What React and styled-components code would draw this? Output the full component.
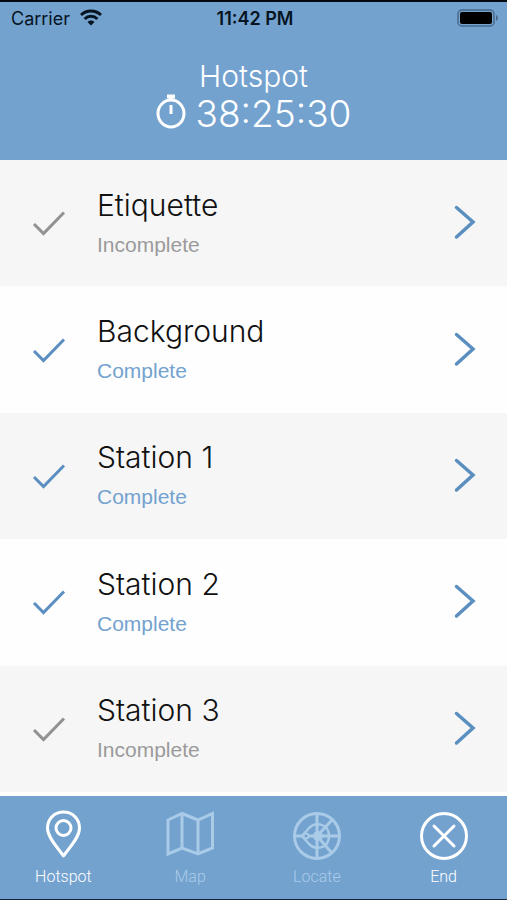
import { useState } from "react";
import styled, { createGlobalStyle } from "styled-components";

const stops = [
  { name: "Etiquette", complete: false },
  { name: "Background", complete: true },
  { name: "Station 1", complete: true },
  { name: "Station 2", complete: true },
  { name: "Station 3", complete: false },
];

const tabs = [
  { name: "Hotspot", icon: PinIcon },
  { name: "Map", icon: MapIcon, dimmed: true },
  { name: "Locate", icon: RadarIcon, dimmed: true },
  { name: "End", icon: EndIcon },
];

const App = () => {
  const [current, setCurrent] = useState("Hotspot");

  return (
    <Screen>
      <GlobalStyle />
      <StatusBar>
        <Carrier>
          Carrier
          <WifiIcon />
        </Carrier>
        <Clock>11:42 PM</Clock>
        <Battery>
          <BatteryIcon />
        </Battery>
      </StatusBar>

      <Header>
        <h1>Hotspot</h1>
        <Timer>
          <StopwatchIcon />
          <span>38:25:30</span>
        </Timer>
      </Header>

      <List>
        {stops.map((stop) => (
          <li key={stop.name}>
            <Row href="#">
              <CheckIcon color={stop.complete ? "#5b8fc2" : "#929292"} />
              <RowText>
                <RowTitle>{stop.name}</RowTitle>
                <RowStatus $complete={stop.complete}>
                  {stop.complete ? "Complete" : "Incomplete"}
                </RowStatus>
              </RowText>
              <ArrowIcon />
            </Row>
          </li>
        ))}
      </List>

      <TabBar>
        {tabs.map(({ name, icon: Icon, dimmed }) => (
          <Tab
            key={name}
            type="button"
            $dimmed={dimmed}
            aria-current={current === name ? "page" : undefined}
            onClick={() => setCurrent(name)}
          >
            <Icon />
            <span>{name}</span>
          </Tab>
        ))}
      </TabBar>
    </Screen>
  );
};

export default App;

function WifiIcon() {
  return (
    <svg width="22" height="18" viewBox="0 0 22 18" aria-hidden="true">
      <g fill="none" stroke="#06141f" strokeWidth="3">
        <path d="M1 6 C6.5 0.7 15.5 0.7 21 6" />
        <path d="M4.6 10 C8.2 6.4 13.8 6.4 17.4 10" />
      </g>
      <path d="M7.5 13 C9.5 11 12.5 11 14.5 13 L11 16.5 Z" fill="#06141f" />
    </svg>
  );
}

function BatteryIcon() {
  return (
    <svg width="42" height="18" viewBox="0 0 42 18" aria-hidden="true">
      <rect x="1" y="1" width="36" height="16" rx="4" fill="none" stroke="#48698a" strokeWidth="1.5" />
      <rect x="3" y="3" width="32" height="12" rx="2" fill="#000" />
      <path d="M39 6 C41.5 7 41.5 11 39 12 Z" fill="#48698a" />
    </svg>
  );
}

function StopwatchIcon() {
  return (
    <svg width="30" height="40" viewBox="0 0 30 40" aria-hidden="true">
      <ellipse cx="15" cy="19.5" rx="13" ry="13.5" fill="none" stroke="#fff" strokeWidth="3" />
      <path d="M11 2.5 H19 M15 3 V7" fill="none" stroke="#fff" strokeWidth="4" />
      <path d="M15 11 V20" stroke="#fff" strokeWidth="3" />
    </svg>
  );
}

function CheckIcon({ color }) {
  return (
    <svg width="34" height="26" viewBox="0 0 34 26" aria-hidden="true">
      <path d="M2 14 L11.5 23.5 L32 2.5" fill="none" stroke={color} strokeWidth="3" />
    </svg>
  );
}

function ArrowIcon() {
  return (
    <svg width="22" height="36" viewBox="0 0 22 36" aria-hidden="true">
      <path d="M2.5 2.5 L19 17 L2.5 32" fill="none" stroke="#5b8fc0" strokeWidth="3.5" strokeLinecap="round" />
    </svg>
  );
}

// every tab icon shares this 48x50 frame
function TabIcon({ children }) {
  return (
    <svg width="48" height="50" viewBox="0 0 48 50" fill="none" stroke="currentColor" strokeWidth="3" aria-hidden="true">
      {children}
    </svg>
  );
}

function PinIcon() {
  return (
    <TabIcon>
      <path d="M24.5 46 C20 39 8.5 28 8.5 18 C8.5 9 15.5 2 24.5 2 C33.5 2 40.5 9 40.5 18 C40.5 28 29 39 24.5 46 Z" strokeLinejoin="round" />
      <circle cx="24.5" cy="18" r="7.5" />
    </TabIcon>
  );
}

function MapIcon() {
  return (
    <TabIcon>
      <path d="M2 10 L16 3.5 L32 10 L46.5 3.5 V38 L32 44 L16 38 L2 44 Z" />
      <path d="M16 3.5 V38 M32 10 V44" />
    </TabIcon>
  );
}

function RadarIcon() {
  return (
    <TabIcon>
      <circle cx="24" cy="26" r="22.5" />
      <path d="M24 4 V48 M2 26 H10 M15 26 H46 M24 26 L39 10 M24 26 L38 42" />
      <path d="M9 26 L16 18 C23 11 36 14 36 26 C36 38 23 41 16 34 Z" strokeWidth="2.5" />
      <circle cx="13" cy="26" r="2.5" strokeWidth="2" />
      <circle cx="25" cy="26" r="5" fill="currentColor" stroke="none" />
    </TabIcon>
  );
}

function EndIcon() {
  return (
    <TabIcon>
      <circle cx="24" cy="26" r="22.5" />
      <path d="M14 16 L34 36 M34 16 L14 36" strokeLinecap="round" />
    </TabIcon>
  );
}

const GlobalStyle = createGlobalStyle`
  * {
    box-sizing: border-box;
  }

  body {
    margin: 0;
    background: #fefefe;
    font-family: "Liberation Sans", Arial, sans-serif;
  }
`;

const Screen = styled.div`
  min-height: 100vh;
  display: flex;
  flex-direction: column;
  border-top: 2px solid #020a10;
  border-bottom: 1px solid #12283d;
`;

const StatusBar = styled.div`
  display: grid;
  grid-template-columns: 1fr auto 1fr;
  align-items: center;
  height: 32px;
  padding: 0 8px 0 11px;
  background: #73a2cf;
  color: #06141f;
  font-family: Inter, sans-serif;
  font-size: 18px;
`;

const Carrier = styled.div`
  display: flex;
  align-items: center;
  gap: 10px;
`;

const Clock = styled.div`
  font-weight: 600;
`;

const Battery = styled.div`
  display: flex;
  justify-content: flex-end;
`;

const Header = styled.header`
  display: flex;
  flex-direction: column;
  align-items: center;
  padding: 24px 0 26px;
  background: #73a2cf;
  color: #fff;
  font-family: Inter, sans-serif;
  font-weight: 300;

  h1 {
    margin: 0;
    font-size: 30px;
    font-weight: 300;
    line-height: 36px;
  }
`;

const Timer = styled.div`
  display: flex;
  align-items: center;
  gap: 10px;
  font-size: 37px;
  line-height: 40px;
`;

const List = styled.ul`
  flex: 1;
  display: grid;
  grid-auto-rows: 1fr;
  margin: 0;
  padding: 0 0 4px;
  list-style: none;

  li {
    display: flex;
  }

  li:nth-child(odd) {
    background: #f6f6f6;
  }
`;

const Row = styled.a`
  flex: 1;
  display: flex;
  align-items: center;
  gap: 31px;
  padding: 0 31px 0 32px;
  color: #111;
  text-decoration: none;
`;

const RowText = styled.div`
  flex: 1;
  padding-top: 3px;
`;

const RowTitle = styled.div`
  font-family: Inter, sans-serif;
  font-size: 30px;
  font-weight: 300;
  line-height: 40px;
`;

const RowStatus = styled.div`
  color: ${(props) => (props.$complete ? "#73a2cf" : "#9b9b9b")};
  font-size: 21px;
  line-height: 40px;
`;

const TabBar = styled.nav`
  display: grid;
  grid-template-columns: repeat(4, 1fr);
  height: 103px;
  background: #73a2cf;
`;

const Tab = styled.button`
  display: flex;
  flex-direction: column;
  align-items: center;
  gap: 5px;
  padding: 14px 0 0;
  border: 0;
  background: none;
  color: ${(props) => (props.$dimmed ? "#a9cbe8" : "#fff")};
  font-family: Roboto, sans-serif;
  font-size: 16px;
  font-weight: 300;
  line-height: 24px;
  cursor: pointer;
`;
